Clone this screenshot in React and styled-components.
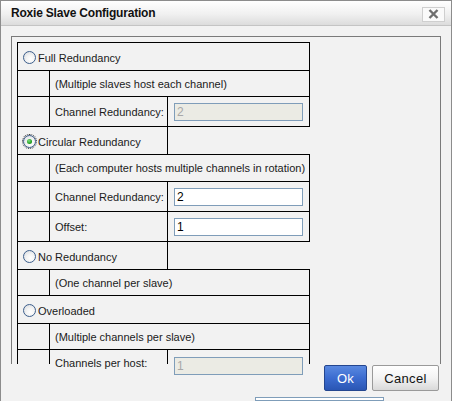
import React from 'react';
import styled, { createGlobalStyle } from 'styled-components';

const GlobalStyle = createGlobalStyle`
    html, body {
        margin: 0;
        padding: 0;
        background: #f2f2f2;
    }
    body {
        font-family: "Liberation Sans", Arial, sans-serif;
        font-size: 11px;
        color: #1a1a1a;
    }
`

const Dialog = styled.div`
    box-sizing: border-box;
    width: 452px;
    height: 401px;
    border: 1px solid #8c8c8c;
    border-bottom: none;
    background: #f2f2f2;
    overflow: hidden;
    display: flex;
    flex-direction: column;
`

const TitleBar = styled.div`
    flex: none;
    height: 24px;
    display: flex;
    align-items: center;
    justify-content: space-between;
    padding: 0 6px 0 10px;
    background: linear-gradient(to bottom, #ffffff 0%, #f0f0f0 55%, #dcdcdc 100%);
    border-bottom: 1px solid #c4c4c4;
`

const Title = styled.span`
    font-size: 12px;
    font-weight: bold;
    color: #111;
    letter-spacing: -0.2px;
`

const CloseButton = styled.div`
    box-sizing: border-box;
    width: 23px;
    height: 15px;
    margin-top: 2px;
    background: #fafafa;
    border: 1px solid #cfcfcf;
    display: flex;
    align-items: center;
    justify-content: center;
`

const Body = styled.div`
    flex: none;
    padding: 10px 10px 0 10px;
`

const ScrollPanel = styled.div`
    box-sizing: border-box;
    height: 328px;
    border: 1px solid #7a7a7a;
    border-bottom: none;
    padding: 5px;
`

const Grid = styled.table`
    border-collapse: collapse;
    table-layout: fixed;
    width: 292px;
`

const Row = styled.tr`
    height: ${(props) => props.h ? props.h + "px" : "auto"};
`

const Cell = styled.td`
    border: 1px solid #000;
    border-bottom: ${(props) => props.cut ? "none" : "1px solid #000"};
    padding: 0 0 0 5px;
    white-space: nowrap;
    vertical-align: ${(props) => props.cut ? "top" : "middle"};
`

// the panel is scrolled: its last row is cut where the panel ends
const CutContent = styled.div`
    height: 14px;
    overflow: visible;
    padding-top: 7px;
    box-sizing: border-box;
`

const EmptyCell = styled.td`
    border: none;
    padding: 0;
`

const OptionLabel = styled.label`
    display: flex;
    align-items: center;
    gap: 2px;
    padding-top: 2px;
`

const RadioDot = styled.span`
    position: relative;
    box-sizing: border-box;
    width: 13px;
    height: 13px;
    border-radius: 50%;
    border: 1px solid #3d5f8c;
    background: radial-gradient(circle at 60% 65%, #ffffff 0%, #f4f4f4 40%, #d2d6dc 100%);
    outline: ${(props) => props.checked ? "1px dotted #333" : "none"};
    outline-offset: 0px;

    &::after {
        content: "";
        display: ${(props) => props.checked ? "block" : "none"};
        position: absolute;
        left: 3px;
        top: 3px;
        width: 5px;
        height: 5px;
        border-radius: 50%;
        background: radial-gradient(circle at 40% 35%, #7fe07f 0%, #22a022 60%, #137013 100%);
    }
`

const TextInput = styled.div`
    box-sizing: border-box;
    width: 129px;
    height: 18px;
    border: 1px solid #7f9db9;
    background: ${(props) => props.disabled ? "#ebebe4" : "#ffffff"};
    color: ${(props) => props.disabled ? "#a8a8a8" : "#000"};
    font-size: 12px;
    line-height: 16px;
    padding-left: 2px;
    margin-left: 1px;
`

const Footer = styled.div`
    flex: none;
    display: flex;
    justify-content: flex-end;
    gap: 5px;
    padding: 1px 12px 0 0;
`

const Button = styled.div`
    box-sizing: border-box;
    height: 26px;
    min-width: ${(props) => props.w}px;
    display: flex;
    align-items: center;
    justify-content: center;
    font-size: 13px;
    border-radius: 2px;
    border: 1px solid ${(props) => props.primary ? "#24468f" : "#9a9a9a"};
    background: ${(props) => props.primary
        ? "linear-gradient(to bottom, #5a89e0 0%, #3c6cd0 50%, #2a56b4 100%)"
        : "linear-gradient(to bottom, #ffffff 0%, #f3f3f3 50%, #d9d9d9 100%)"};
    color: ${(props) => props.primary ? "#fff" : "#111"};
    letter-spacing: 0.3px;
`

const LowerBox = styled.div`
    box-sizing: border-box;
    width: 129px;
    height: 20px;
    margin: 6px 0 0 254px;
    border: 1px solid #7f9db9;
    background: #fff;
`

function Radio({ checked, children }) {
    return (
        <OptionLabel>
            <RadioDot checked={checked} />
            {children}
        </OptionLabel>
    );
}

const options = [
    {
        label: "Full Redundancy",
        full: true,
        desc: "(Multiple slaves host each channel)",
        fields: [{ name: "Channel Redundancy:", value: "2", disabled: true }],
    },
    {
        label: "Circular Redundancy",
        checked: true,
        desc: "(Each computer hosts multiple channels in rotation)",
        fields: [
            { name: "Channel Redundancy:", value: "2" },
            { name: "Offset:", value: "1" },
        ],
    },
    {
        label: "No Redundancy",
        desc: "(One channel per slave)",
        fields: [],
    },
    {
        label: "Overloaded",
        full: true,
        desc: "(Multiple channels per slave)",
        fields: [{ name: "Channels per host:", value: "1", disabled: true, cut: true }],
    },
];

function FieldRow({ field }) {
    const wrap = (content) => field.cut ? <CutContent>{content}</CutContent> : content;
    return (
        <Row h={field.cut ? null : 30}>
            <Cell cut={field.cut} />
            <Cell cut={field.cut}>{wrap(field.name)}</Cell>
            <Cell cut={field.cut}>
                {wrap(<TextInput disabled={field.disabled}>{field.value}</TextInput>)}
            </Cell>
        </Row>
    );
}

export default function App() {
    return (
        <Dialog>
            <GlobalStyle />
            <TitleBar>
                <Title>Roxie Slave Configuration</Title>
                <CloseButton>
                    <svg width="11" height="10" viewBox="0 0 11 10">
                        <path d="M1.5 1 L9.5 9 M9.5 1 L1.5 9" stroke="#6e6e6e" strokeWidth="2.4" />
                    </svg>
                </CloseButton>
            </TitleBar>
            <Body>
                <ScrollPanel>
                    <Grid>
                        <colgroup>
                            <col style={{ width: 32 }} />
                            <col style={{ width: 118 }} />
                            <col style={{ width: 142 }} />
                        </colgroup>
                        <tbody>
                            {options.map((opt) => (
                                <React.Fragment key={opt.label}>
                                    <Row h={28}>
                                        <Cell colSpan={opt.full ? 3 : 2}>
                                            <Radio checked={opt.checked}>{opt.label}</Radio>
                                        </Cell>
                                        {!opt.full && <EmptyCell />}
                                    </Row>
                                    <Row h={opt.checked ? 27 : 26}>
                                        <Cell />
                                        <Cell colSpan={2}>{opt.desc}</Cell>
                                    </Row>
                                    {opt.fields.map((f) => (
                                        <FieldRow field={f} key={f.name} />
                                    ))}
                                </React.Fragment>
                            ))}
                        </tbody>
                    </Grid>
                </ScrollPanel>
            </Body>
            <Footer>
                <Button primary w={43}>Ok</Button>
                <Button w={67}>Cancel</Button>
            </Footer>
            <LowerBox />
        </Dialog>
    );
}
